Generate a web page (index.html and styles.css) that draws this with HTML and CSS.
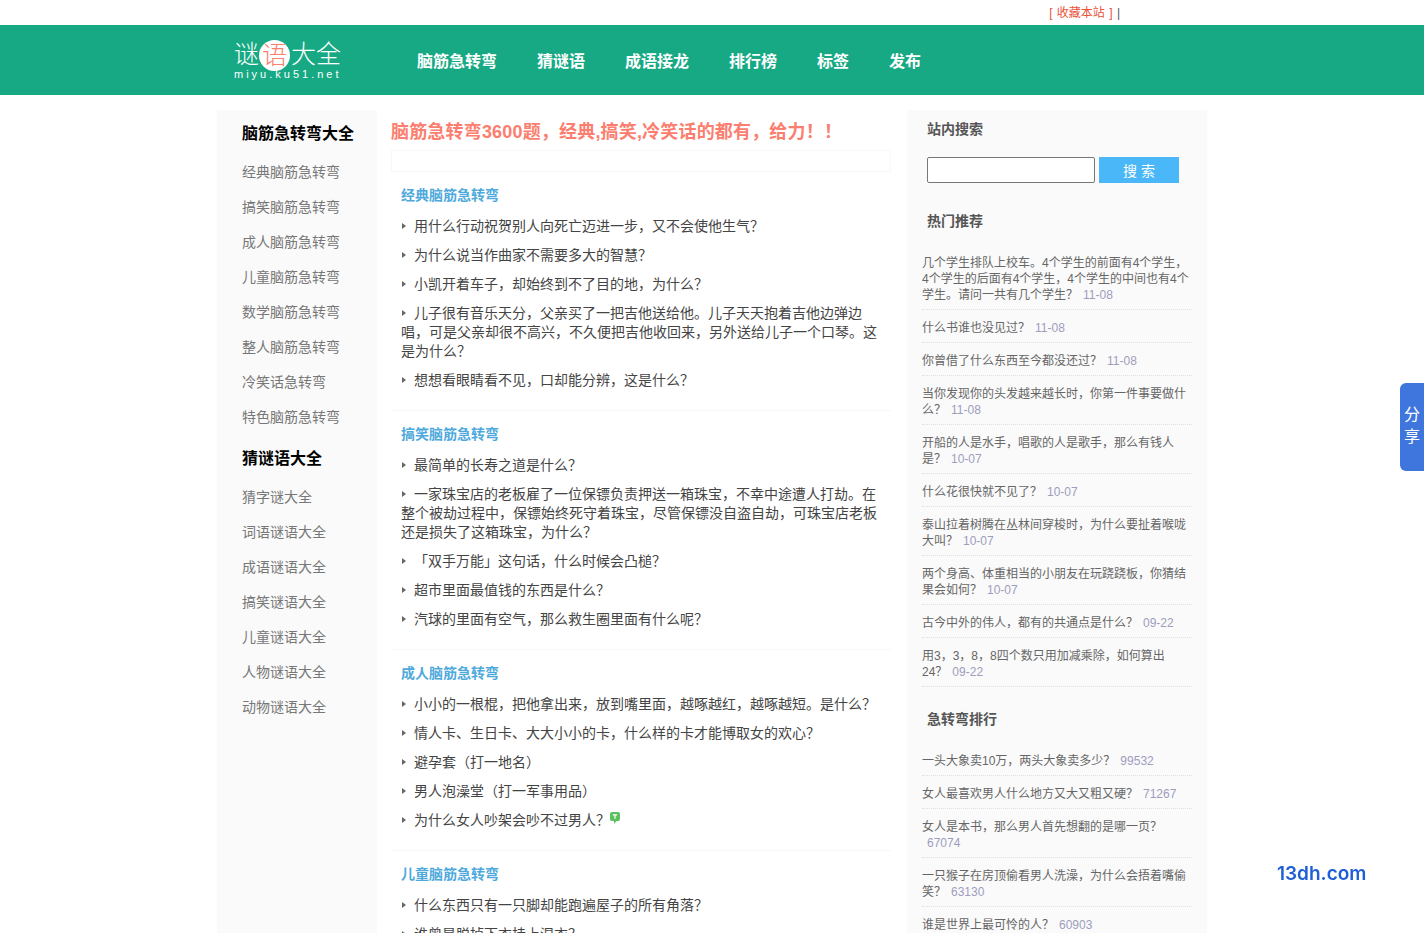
FILE: index.html

```html
<!DOCTYPE html>
<html lang="zh-CN">
<head>
    <meta charset="UTF-8">
    <meta name="viewport" content="width=device-width, initial-scale=1.0">
    <title>脑筋急转弯3600题</title>
    <link rel="stylesheet" href="styles.css">
</head>
<body>
<div class="topbar">
    <div class="topbar-inner"><span class="fav">[ 收藏本站 ]</span> <span class="pipe">|</span></div>
</div>
<header class="site-header">
    <div class="header-inner">
        <a class="logo" href="#">
            <span class="logo-name">谜<span class="logo-dot">语</span>大全</span>
            <span class="logo-url">miyu.ku51.net</span>
        </a>
        <nav class="nav">
            <a href="#">脑筋急转弯</a>
            <a href="#">猜谜语</a>
            <a href="#">成语接龙</a>
            <a href="#">排行榜</a>
            <a href="#">标签</a>
            <a href="#">发布</a>
        </nav>
    </div>
</header>

<div class="layout">
    <aside class="left-col">
        <h3>脑筋急转弯大全</h3>
        <ul>
            <li><a href="#">经典脑筋急转弯</a></li>
            <li><a href="#">搞笑脑筋急转弯</a></li>
            <li><a href="#">成人脑筋急转弯</a></li>
            <li><a href="#">儿童脑筋急转弯</a></li>
            <li><a href="#">数学脑筋急转弯</a></li>
            <li><a href="#">整人脑筋急转弯</a></li>
            <li><a href="#">冷笑话急转弯</a></li>
            <li><a href="#">特色脑筋急转弯</a></li>
        </ul>
        <h3>猜谜语大全</h3>
        <ul>
            <li><a href="#">猜字谜大全</a></li>
            <li><a href="#">词语谜语大全</a></li>
            <li><a href="#">成语谜语大全</a></li>
            <li><a href="#">搞笑谜语大全</a></li>
            <li><a href="#">儿童谜语大全</a></li>
            <li><a href="#">人物谜语大全</a></li>
            <li><a href="#">动物谜语大全</a></li>
        </ul>
    </aside>

    <main class="main-col">
        <h1 class="page-title">脑筋急转弯3600题，经典,搞笑,冷笑话的都有，给力！！</h1>
        <div class="title-box"></div>

        <section class="qa">
            <h2>经典脑筋急转弯</h2>
            <ul>
                <li>用什么行动祝贺别人向死亡迈进一步，又不会使他生气？</li>
                <li>为什么说当作曲家不需要多大的智慧？</li>
                <li>小凯开着车子，却始终到不了目的地，为什么？</li>
                <li>儿子很有音乐天分，父亲买了一把吉他送给他。儿子天天抱着吉他边弹边唱，可是父亲却很不高兴，不久便把吉他收回来，另外送给儿子一个口琴。这是为什么？</li>
                <li>想想看眼睛看不见，口却能分辨，这是什么？</li>
            </ul>
        </section>
        <section class="qa">
            <h2>搞笑脑筋急转弯</h2>
            <ul>
                <li>最简单的长寿之道是什么？</li>
                <li>一家珠宝店的老板雇了一位保镖负责押送一箱珠宝，不幸中途遭人打劫。在整个被劫过程中，保镖始终死守着珠宝，尽管保镖没自盗自劫，可珠宝店老板还是损失了这箱珠宝，为什么？</li>
                <li>「双手万能」这句话，什么时候会凸槌？</li>
                <li>超市里面最值钱的东西是什么？</li>
                <li>汽球的里面有空气，那么救生圈里面有什么呢？</li>
            </ul>
        </section>
        <section class="qa">
            <h2>成人脑筋急转弯</h2>
            <ul>
                <li>小小的一根棍，把他拿出来，放到嘴里面，越啄越红，越啄越短。是什么？</li>
                <li>情人卡、生日卡、大大小小的卡，什么样的卡才能博取女的欢心？</li>
                <li>避孕套（打一地名）</li>
                <li>男人泡澡堂（打一军事用品）</li>
                <li>为什么女人吵架会吵不过男人？<svg class="tip" width="10" height="12" viewBox="0 0 10 12"><path d="M2 0h6a2 2 0 0 1 2 2v5a2 2 0 0 1-2 2h-1.5l-2.5 3v-3h-2a2 2 0 0 1-2-2v-5a2 2 0 0 1 2-2z" fill="#5cc05f"/><path d="M2.8 2.8h4.4M5 2.8v4" stroke="#fff" stroke-width="1.2" fill="none"/></svg></li>
            </ul>
        </section>
        <section class="qa">
            <h2>儿童脑筋急转弯</h2>
            <ul>
                <li>什么东西只有一只脚却能跑遍屋子的所有角落？</li>
                <li>谁曾是脱掉下衣挂上湿衣？</li>
            </ul>
        </section>
    </main>

    <aside class="right-col">
        <h4 class="search-title">站内搜索</h4>
        <form class="search">
            <input type="text">
            <button type="button">搜 索</button>
        </form>

        <h4>热门推荐</h4>
        <ul class="side-list">
            <li>几个学生排队上校车。4个学生的前面有4个学生，4个学生的后面有4个学生，4个学生的中间也有4个学生。请问一共有几个学生？<span>11-08</span></li>
            <li>什么书谁也没见过？<span>11-08</span></li>
            <li>你曾借了什么东西至今都没还过？<span>11-08</span></li>
            <li>当你发现你的头发越来越长时，你第一件事要做什么？<span>11-08</span></li>
            <li>开船的人是水手，唱歌的人是歌手，那么有钱人是？<span>10-07</span></li>
            <li>什么花很快就不见了？<span>10-07</span></li>
            <li>泰山拉着树腾在丛林间穿梭时，为什么要扯着喉咙大叫？<span>10-07</span></li>
            <li>两个身高、体重相当的小朋友在玩跷跷板，你猜结果会如何？<span>10-07</span></li>
            <li>古今中外的伟人，都有的共通点是什么？<span>09-22</span></li>
            <li>用3，3，8，8四个数只用加减乘除，如何算出24？<span>09-22</span></li>
        </ul>

        <h4>急转弯排行</h4>
        <ul class="side-list">
            <li>一头大象卖10万，两头大象卖多少？<span>99532</span></li>
            <li>女人最喜欢男人什么地方又大又粗又硬？<span>71267</span></li>
            <li>女人是本书，那么男人首先想翻的是哪一页？<span>67074</span></li>
            <li>一只猴子在房顶偷看男人洗澡，为什么会捂着嘴偷笑？<span>63130</span></li>
            <li>谁是世界上最可怜的人？<span>60903</span></li>
        </ul>
    </aside>
</div>

<a class="share" href="#">分享</a>
<div class="watermark">13dh.com</div>
</body>
</html>
```

FILE: styles.css

```css
html, body {
    height: 100%;
    overflow: hidden;
}

body {
    margin: 0;
    padding: 0;
    background-color: #fff;
    color: #444;
    font-family: "Liberation Sans", "Noto Sans CJK SC", sans-serif;
    font-size: 14px;
}

a {
    color: inherit;
    text-decoration: none;
}

ul {
    list-style: none;
    margin: 0;
    padding: 0;
}

h1, h2, h3, h4 {
    margin: 0;
}

/* top strip */
.topbar {
    height: 25px;
}

.topbar-inner {
    width: 990px;
    margin: 0 auto;
    padding-right: 87px;
    box-sizing: border-box;
    text-align: right;
    font-size: 12px;
    line-height: 27px;
    word-spacing: 1px;
}

.fav {
    color: #e8533a;
}

.pipe {
    color: #555;
}

/* header */
.site-header {
    height: 70px;
    background-color: #17a984;
}

.header-inner {
    display: flex;
    align-items: center;
    width: 990px;
    height: 70px;
    margin: 0 auto;
    padding-left: 17px;
    box-sizing: border-box;
}

.logo {
    display: block;
    align-self: flex-start;
    width: 183px;
    flex-shrink: 0;
    padding-top: 15px;
    color: #fff;
}

.logo-name {
    display: flex;
    align-items: flex-start;
    height: 31px;
    font-size: 25px;
    font-weight: 300;
    line-height: 29px;
}

.logo-dot {
    display: block;
    width: 31px;
    height: 31px;
    margin: 0 1px 0 0;
    border-radius: 50%;
    background-color: #fff;
    color: #f8806f;
    text-align: center;
    line-height: 30px;
}

.logo-url {
    display: block;
    margin-top: -3px;
    font-size: 11px;
    line-height: 13px;
    letter-spacing: 3px;
}

.nav {
    display: flex;
    gap: 40px;
}

.nav a {
    color: #fff;
    font-size: 16px;
    font-weight: bold;
}

/* three columns */
.layout {
    display: flex;
    align-items: stretch;
    width: 990px;
    min-height: 900px;
    margin: 15px auto 0;
}

.left-col {
    width: 160px;
    flex-shrink: 0;
    padding: 13px 0 0 25px;
    box-sizing: border-box;
    background-color: #fafafa;
}

.left-col h3 {
    color: #000;
    font-size: 16px;
    line-height: 22px;
    margin-bottom: 10px;
}

.left-col ul {
    margin-bottom: 13px;
}

.left-col li {
    color: #777;
    font-size: 14px;
    line-height: 35px;
}

.main-col {
    width: 500px;
    flex-shrink: 0;
    margin-left: 14px;
}

.page-title {
    color: #fb7e6f;
    font-size: 18px;
    line-height: 24px;
    letter-spacing: 0.18px;
    margin-top: 10px;
}

.title-box {
    height: 22px;
    margin-top: 6px;
    border: 1px solid #f8f8f8;
    box-sizing: border-box;
}

.qa {
    padding: 13px 10px 10px;
    border-bottom: 1px solid #f8f8f8;
}

.qa h2 {
    color: #4ea9dc;
    font-size: 14px;
    line-height: 20px;
    margin-bottom: 12px;
}

.qa li {
    width: 480px;
    margin-bottom: 10px;
    color: #444;
    line-height: 19px;
}

.qa li::before {
    content: "";
    display: inline-block;
    margin-right: 8px;
    margin-left: 1px;
    border-left: 4px solid #666;
    border-top: 3px solid transparent;
    border-bottom: 3px solid transparent;
    vertical-align: 2px;
}

.tip {
    margin-top: 1px;
    vertical-align: top;
}

.right-col {
    width: 300px;
    flex-shrink: 0;
    margin-left: 16px;
    padding: 10px 15px 0;
    box-sizing: border-box;
    background-color: #fafafa;
}

.right-col h4 {
    padding-left: 5px;
    color: #555;
    font-size: 14px;
    line-height: 18px;
    margin: 23px 0 15px;
}

.right-col .search-title {
    margin: 0 0 19px;
}

.search {
    display: flex;
    gap: 4px;
    margin-left: 5px;
    margin-bottom: 29px;
}

.search input {
    width: 168px;
    height: 26px;
    padding: 0;
    box-sizing: border-box;
    border: 1px solid #777;
    border-radius: 2px;
    background-color: #fff;
}

.search button {
    width: 80px;
    height: 26px;
    padding: 0;
    border: 0;
    background-color: #4ab8f8;
    color: #fff;
    font-family: inherit;
    font-size: 14px;
}

.side-list li {
    padding: 10px 3px 6px 0;
    border-bottom: 1px dotted #e0e0e0;
    color: #666;
    font-size: 12px;
    line-height: 16px;
}

.side-list span {
    margin-left: 5px;
    color: #9d9dbd;
}

/* overlays */
.share {
    position: fixed;
    top: 383px;
    right: 0;
    width: 24px;
    height: 88px;
    box-sizing: border-box;
    padding: 21px 4px 0;
    border-radius: 6px 0 0 6px;
    background-color: #3f76dd;
    color: #fff;
    font-size: 16px;
    line-height: 22px;
}

.watermark {
    position: fixed;
    left: 1277px;
    top: 861px;
    color: #1f5fd6;
    font-family: Inter, "Liberation Sans", sans-serif;
    font-size: 19px;
    font-weight: 600;
    line-height: 26px;
}
```
